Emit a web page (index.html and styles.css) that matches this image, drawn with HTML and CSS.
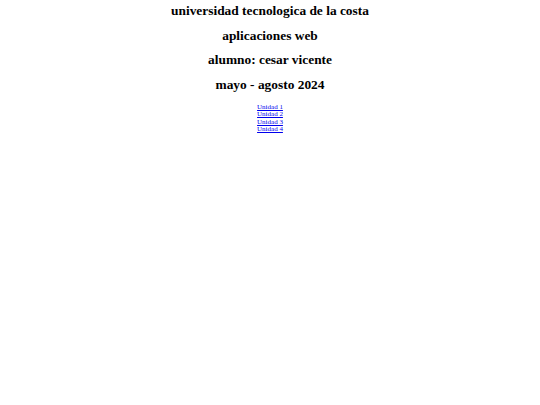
FILE: index.html
```html
<!DOCTYPE html>
<html>
<head>
<meta charset="utf-8">
<link rel="stylesheet" href="styles.css">
</head>
<body>
<div class="page">
  <h2 class="title">universidad tecnologica de la costa</h2>
  <h2 class="title">aplicaciones web</h2>
  <h2 class="title">alumno: cesar vicente</h2>
  <h2 class="title">mayo - agosto 2024</h2>
  <nav class="links">
    <a href="#">Unidad 1</a>
    <a href="#">Unidad 2</a>
    <a href="#">Unidad 3</a>
    <a href="#">Unidad 4</a>
  </nav>
</div>
</body>
</html>
```
FILE: styles.css
```css
html, body {
  margin: 0;
  padding: 0;
  background: #fff;
}
.page {
  display: flex;
  flex-direction: column;
  align-items: center;
  font-family: "Liberation Serif", "Times New Roman", serif;
  padding-top: 2px;
}
.title {
  margin: 0;
  font-size: 13.4px;
  line-height: 18px;
  height: 24.7px;
  font-weight: bold;
  color: #000;
}
.links {
  display: flex;
  flex-direction: column;
  align-items: center;
  margin-top: 3px;
  font-size: 7px;
  line-height: 7.5px;
}
.links a {
  color: #0000ee;
}
```
